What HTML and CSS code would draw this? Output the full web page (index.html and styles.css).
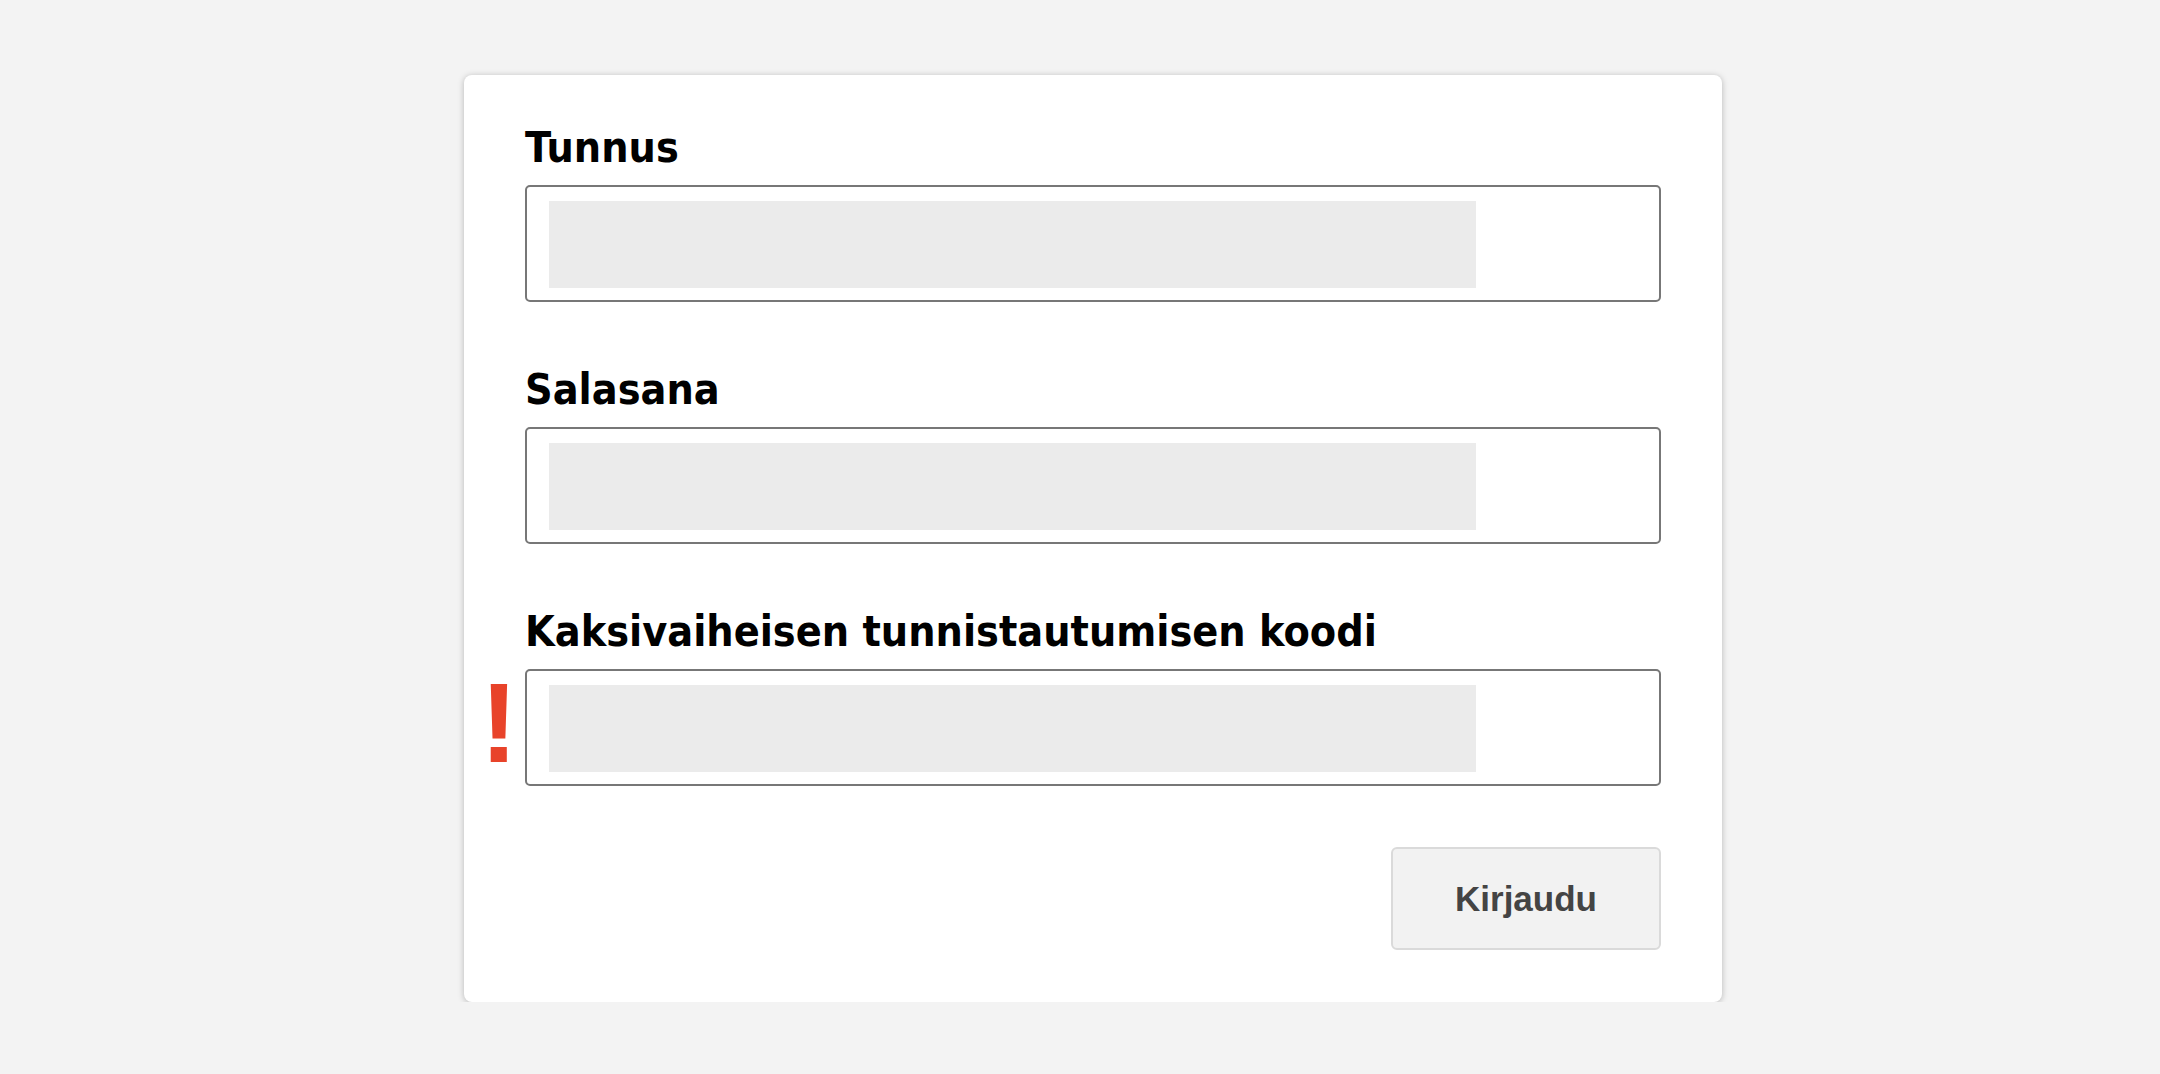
FILE: index.html
```html
<!DOCTYPE html>
<html lang="fi">
<head>
<meta charset="utf-8">
<title>Kirjaudu</title>
<link rel="stylesheet" href="styles.css">
</head>
<body>
<main class="page">
  <form class="card">
    <div class="field">
      <label class="label" for="tunnus">Tunnus</label>
      <div class="box"><input class="control" id="tunnus" type="text"></div>
    </div>
    <div class="field">
      <label class="label" for="salasana">Salasana</label>
      <div class="box"><input class="control" id="salasana" type="password"></div>
    </div>
    <div class="field">
      <label class="label" for="koodi">Kaksivaiheisen tunnistautumisen koodi</label>
      <div class="box box-error">
        <span class="alert">!</span>
        <input class="control" id="koodi" type="text">
      </div>
    </div>
    <div class="actions">
      <button class="btn" type="button">Kirjaudu</button>
    </div>
  </form>
</main>
</body>
</html>
```

FILE: styles.css
```css
html, body {
  margin: 0;
  padding: 0;
  background: #f3f3f3;
}

.page {
  padding-top: 75px;
  padding-left: 464px;
}

.card {
  box-sizing: border-box;
  width: 1258px;
  background: #ffffff;
  border-radius: 8px;
  box-shadow: 0 1px 6px rgba(0, 0, 0, 0.25);
  padding: 47px 61px 52px 61px;
  display: flex;
  flex-direction: column;
}

.field {
  display: flex;
  flex-direction: column;
  gap: 13px;
}

.field + .field {
  margin-top: 62px;
}

.label {
  font-family: "DejaVu Sans Condensed", "DejaVu Sans", sans-serif;
  font-weight: bold;
  font-size: 42.7px;
  line-height: 50px;
  color: #000;
}

.box {
  position: relative;
  box-sizing: border-box;
  height: 117px;
  border: 2px solid #777777;
  border-radius: 5px;
  padding: 14px 22px;
  background: #fff;
}

.control {
  display: block;
  box-sizing: border-box;
  width: 927px;
  height: 87px;
  margin: 0;
  border: none;
  outline: none;
  background: #ebebeb;
  padding: 0 10px;
  font-family: "Liberation Sans", sans-serif;
  font-size: 32px;
}

.alert {
  position: absolute;
  left: -47px;
  top: -5px;
  font-family: "Liberation Sans", sans-serif;
  font-weight: bold;
  font-size: 114px;
  line-height: 114px;
  color: #e8432a;
}

.actions {
  display: flex;
  justify-content: flex-end;
  margin-top: 61px;
}

.btn {
  box-sizing: border-box;
  width: 270px;
  height: 103px;
  background: #f2f2f2;
  border: 2px solid #dadada;
  border-radius: 6px;
  font-family: "Liberation Sans", Arial, sans-serif;
  font-weight: bold;
  font-size: 35px;
  color: #444;
  padding: 0;
}
```
